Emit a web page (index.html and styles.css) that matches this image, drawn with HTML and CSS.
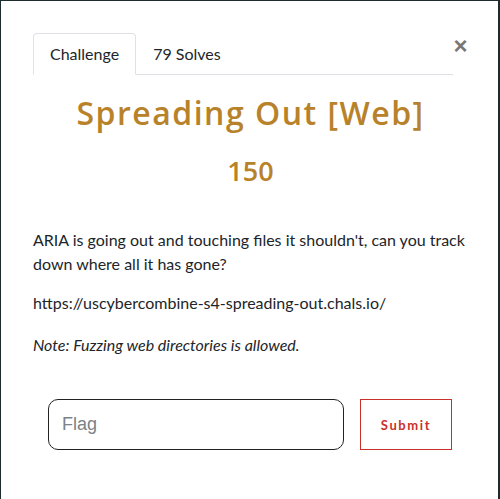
FILE: index.html
```html
<!DOCTYPE html>
<html>
<head>
<meta charset="utf-8">
<link rel="stylesheet" href="styles.css">
</head>
<body>
<div class="modal">
  <div class="header">
    <ul class="tabs">
      <li class="tab active">Challenge</li>
      <li class="tab">79 Solves</li>
    </ul>
    <button class="close">&times;</button>
  </div>
  <h2 class="title">Spreading Out [Web]</h2>
  <h3 class="value">150</h3>
  <div class="desc">
    <p>ARIA is going out and touching files it shouldn't, can you track down where all it has gone?</p>
    <p class="url">https://uscybercombine-s4-spreading-out.chals.io/</p>
    <p><em>Note: Fuzzing web directories is allowed.</em></p>
  </div>
  <form class="submit-row">
    <input class="flag" type="text" placeholder="Flag">
    <button class="submit" type="button">Submit</button>
  </form>
</div>
</body>
</html>
```
FILE: styles.css
```css
html, body {
  margin: 0;
  height: 100%;
}
body {
  background: #1f2c2e;
  padding: 1px 2px 0 1px;
  box-sizing: border-box;
}
.modal {
  background: #fff;
  height: 100%;
  box-sizing: border-box;
  padding: 32px 30px 0 32px;
  font-family: Lato, "Open Sans", sans-serif;
  color: #212529;
}
.header {
  display: flex;
  align-items: flex-start;
}
.tabs {
  list-style: none;
  margin: 0;
  padding: 0;
  display: flex;
  flex: 1;
  border-bottom: 1px solid #dee2e6;
}
.tab {
  padding: 8px 16px;
  font-size: 16px;
  line-height: 24px;
  border: 1px solid transparent;
  border-top-left-radius: 4px;
  border-top-right-radius: 4px;
  margin-bottom: -1px;
}
.tab.active {
  border-color: #dee2e6 #dee2e6 #fff;
}
.close {
  background: none;
  border: none;
  padding: 0;
  margin: 0;
  width: 15px;
  font-size: 24px;
  line-height: 24px;
  font-weight: 700;
  color: #777;
  font-family: "Liberation Sans", Arial, sans-serif;
  transform: translate(0, 1px);
}
.title {
  margin: 16px 0 0;
  text-align: center;
  font-family: "Open Sans", sans-serif;
  font-weight: 600;
  font-size: 32px;
  line-height: 44px;
  letter-spacing: 1.5px;
  color: #b8822a;
}
.value {
  margin: 18px 0 0;
  text-align: center;
  font-family: "Open Sans", sans-serif;
  font-weight: 600;
  font-size: 27px;
  line-height: 36px;
  color: #b8822a;
}
.desc {
  margin-top: 39px;
}
.desc p {
  margin: 0 0 15px;
  font-size: 16px;
  line-height: 24px;
}
.desc p.url {
  margin-bottom: 18px;
}
.submit-row {
  display: flex;
  gap: 16px;
  margin: 42px 15px 0 15px;
}
.flag {
  width: 296px;
  height: 51px;
  box-sizing: border-box;
  border: 1px solid #222;
  border-radius: 10px;
  padding: 0 13px;
  font-family: "Liberation Sans", Arial, sans-serif;
  font-size: 18px;
  outline: none;
}
.flag::placeholder {
  color: #7b8288;
}
.submit {
  width: 92px;
  height: 51px;
  background: #fff;
  border: 1px solid #c9302c;
  color: #c9302c;
  font-family: Lato, sans-serif;
  font-weight: 700;
  font-size: 13px;
  letter-spacing: 1.6px;
  padding: 0;
}
```
